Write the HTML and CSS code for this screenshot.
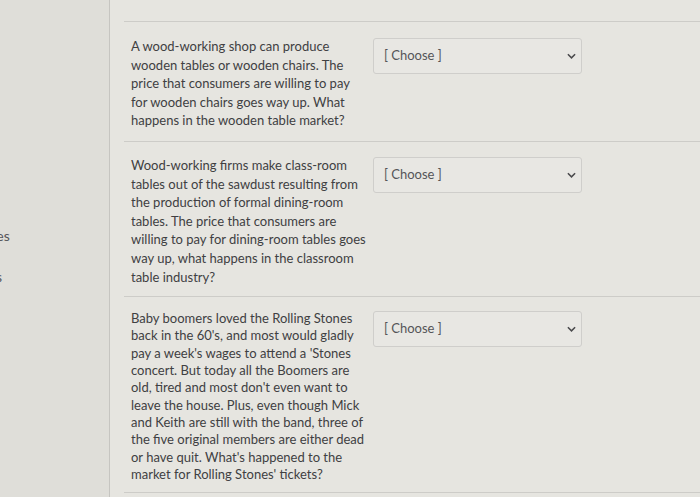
FILE: index.html
```html
<!DOCTYPE html>
<html>
<head>
<meta charset="utf-8">
<link rel="stylesheet" href="styles.css">
</head>
<body>
<div class="page">
  <aside class="sidebar">
    <div class="nav-item nav-pages">Pages</div>
    <div class="nav-item nav-files">Files</div>
  </aside>
  <main class="main">
    <div class="top-strip"></div>
    <div class="question q-first">
      <p class="q-text">A wood-working shop can produce wooden tables or wooden chairs. The<br>price that consumers are willing to pay for wooden chairs goes way up. What happens in the wooden table market?</p>
      <div class="select"><span>[ Choose ]</span><svg class="chev" viewBox="0 0 10 6" width="9" height="6"><path d="M1 1 L5 5 L9 1" fill="none" stroke="#4a4a4c" stroke-width="1.7"/></svg></div>
    </div>
    <div class="question">
      <p class="q-text">Wood-working firms make class-room tables out of the sawdust resulting from the production of formal dining-room tables. The price that consumers are willing to pay for dining-room tables goes way up, what happens in the classroom table industry?</p>
      <div class="select"><span>[ Choose ]</span><svg class="chev" viewBox="0 0 10 6" width="9" height="6"><path d="M1 1 L5 5 L9 1" fill="none" stroke="#4a4a4c" stroke-width="1.7"/></svg></div>
    </div>
    <div class="question q-last">
      <p class="q-text">Baby boomers loved the Rolling Stones back in the 60's, and most would gladly pay a week's wages to attend a 'Stones concert. But today all the Boomers are old, tired and most don't even want to leave the house. Plus, even though Mick and Keith are still with the band, three of the five original members are either dead or have quit. What's happened to the market for Rolling Stones' tickets?</p>
      <div class="select"><span>[ Choose ]</span><svg class="chev" viewBox="0 0 10 6" width="9" height="6"><path d="M1 1 L5 5 L9 1" fill="none" stroke="#4a4a4c" stroke-width="1.7"/></svg></div>
    </div>
  </main>
</div>
</body>
</html>
```

FILE: styles.css
```css
html, body {
  margin: 0;
  padding: 0;
  background: #e6e5e0;
  font-family: Lato, "Liberation Sans", sans-serif;
  color: #404042;
  overflow: hidden;
}
.page {
  display: flex;
  width: 700px;
  height: 497px;
}
.sidebar {
  width: 110px;
  flex: none;
  background: #dfded9;
  border-right: 1px solid #c6c5c1;
  overflow: hidden;
  padding-top: 226px;
  box-sizing: border-box;
}
.nav-item {
  font-size: 14px;
  line-height: 20px;
  color: #55555a;
  white-space: nowrap;
}
.nav-pages {
  margin-left: -26px;
}
.nav-files {
  margin-top: 21px;
  margin-left: -26px;
}
.main {
  flex: 1;
  padding-left: 14px;
}
.top-strip {
  height: 21px;
}
.question {
  display: flex;
  align-items: flex-start;
  border-top: 1px solid #cdccc8;
  padding: 14px 0 10px 7px;
}
.q-first {
  padding-top: 15px;
  padding-bottom: 11px;
}
.q-text {
  margin: 0;
  width: 238px;
  font-size: 13px;
  line-height: 18.6px;
}
.q-last {
  padding-top: 13px;
  padding-bottom: 9px;
  border-bottom: 1px solid #cdccc8;
}
.q-last .q-text {
  line-height: 17.3px;
}
.select {
  margin-left: 4px;
  margin-top: 1px;
  width: 209px;
  height: 36px;
  box-sizing: border-box;
  border: 1px solid #cfcecb;
  border-radius: 3px;
  background: #e8e7e3;
  display: flex;
  align-items: center;
  justify-content: space-between;
  padding: 0 5px 0 10px;
  font-size: 13px;
  color: #555558;
}
.select span {
  margin-top: -2px;
}
.chev {
  display: block;
}
```
